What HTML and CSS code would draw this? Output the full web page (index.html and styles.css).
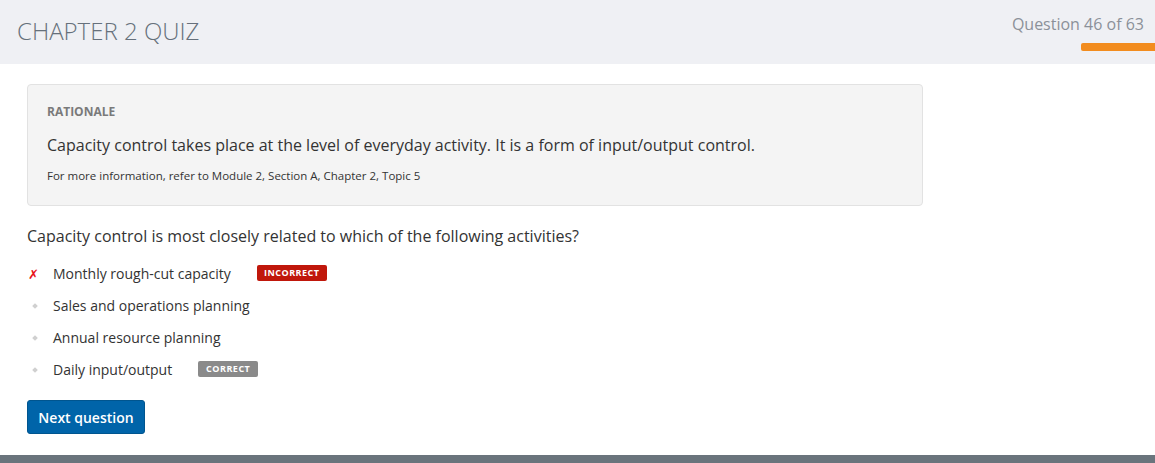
FILE: index.html
```html
<!DOCTYPE html>
<html>
<head>
<meta charset="utf-8">
<link rel="stylesheet" href="styles.css">
</head>
<body>
<div class="page">
  <header class="header">
    <h1 class="title">CHAPTER 2 QUIZ</h1>
    <div class="progress">
      <div class="progress-text">Question 46 of 63</div>
      <div class="progress-bar"></div>
    </div>
  </header>
  <main class="main">
    <section class="rationale">
      <div class="rationale-label">RATIONALE</div>
      <p class="rationale-text">Capacity control takes place at the level of everyday activity. It is a form of input/output control.</p>
      <p class="rationale-ref">For more information, refer to Module 2, Section A, Chapter 2, Topic 5</p>
    </section>
    <p class="question">Capacity control is most closely related to which of the following activities?</p>
    <ul class="options">
      <li class="option"><span class="mark mark-x">✗</span><span class="opt-text">Monthly rough-cut capacity</span><span class="badge badge-incorrect">INCORRECT</span></li>
      <li class="option"><span class="mark"><span class="dot"></span></span><span class="opt-text">Sales and operations planning</span></li>
      <li class="option"><span class="mark"><span class="dot"></span></span><span class="opt-text">Annual resource planning</span></li>
      <li class="option"><span class="mark"><span class="dot"></span></span><span class="opt-text">Daily input/output</span><span class="badge badge-correct">CORRECT</span></li>
    </ul>
    <button class="next-btn">Next question</button>
  </main>
  <footer class="footer"></footer>
</div>
</body>
</html>
```
FILE: styles.css
```css
* { box-sizing: border-box; }
html, body { margin: 0; padding: 0; }
body {
  font-family: "Open Sans", "Liberation Sans", sans-serif;
  color: #333;
  background: #fff;
}
.page {
  height: 463px;
  display: flex;
  flex-direction: column;
}
.header {
  height: 64px;
  background: #eff0f4;
  display: flex;
  justify-content: space-between;
  align-items: flex-start;
}
.title {
  margin: 15px 0 0 17px;
  font-size: 24px;
  font-weight: 300;
  color: #66707b;
  line-height: 32px;
}
.progress {
  display: flex;
  flex-direction: column;
  align-items: flex-end;
}
.progress-text {
  margin: 13px 11px 0 0;
  font-size: 16px;
  line-height: 22px;
  color: #8b9099;
}
.progress-bar {
  margin-top: 8px;
  width: 74px;
  height: 8px;
  background: #f28c1e;
  border-radius: 2px 0 0 2px;
}
.main {
  flex: 1;
  padding: 20px 0 0 27px;
}
.rationale {
  width: 896px;
  height: 122px;
  background: #f4f4f4;
  border: 1px solid #e2e2e2;
  border-radius: 4px;
  padding: 19px 19px 0 19px;
}
.rationale-label {
  font-size: 12px;
  font-weight: 700;
  color: #7a7a7a;
  line-height: 16px;
}
.rationale-text {
  margin: 14px 0 0 0;
  font-size: 16px;
  line-height: 22px;
  color: #333;
}
.rationale-ref {
  margin: 12px 0 0 0;
  font-size: 11.5px;
  line-height: 16px;
  color: #333;
}
.question {
  margin: 18px 0 0 0;
  font-size: 16px;
  line-height: 24px;
  color: #333;
}
.options {
  list-style: none;
  margin: 10px 0 0 0;
  padding: 0;
}
.option {
  height: 32px;
  display: flex;
  align-items: center;
  font-size: 14px;
  color: #333;
}
.mark {
  width: 26px;
  display: flex;
  align-items: center;
  justify-content: flex-start;
  padding-left: 1px;
}
.mark-x {
  color: #e8141b;
  font-size: 13px;
  font-weight: 700;
  font-style: italic;
  font-family: "DejaVu Sans", sans-serif;
}
.dot {
  width: 4px;
  height: 4px;
  margin-left: 5px;
  background: #d0d0d0;
  transform: rotate(45deg);
  display: block;
}
.opt-text {
  line-height: 20px;
}
.badge {
  display: inline-block;
  height: 16px;
  line-height: 16px;
  font-size: 9px;
  font-weight: 700;
  letter-spacing: 0.5px;
  color: #fff;
  border-radius: 2px;
  margin-top: -2px;
  text-align: center;
}
.badge-incorrect {
  background: #c0170b;
  margin-left: 26px;
  width: 70px;
}
.badge-correct {
  background: #8a8a8a;
  margin-left: 26px;
  width: 60px;
}
.next-btn {
  margin-top: 14px;
  width: 118px;
  height: 34px;
  background: #0064a9;
  border: 1px solid #00558f;
  border-radius: 3px;
  color: #fff;
  font-family: "Open Sans", "Liberation Sans", sans-serif;
  font-size: 14px;
  font-weight: 600;
  padding: 0;
}
.footer {
  height: 8px;
  background: #6a747c;
}
```
